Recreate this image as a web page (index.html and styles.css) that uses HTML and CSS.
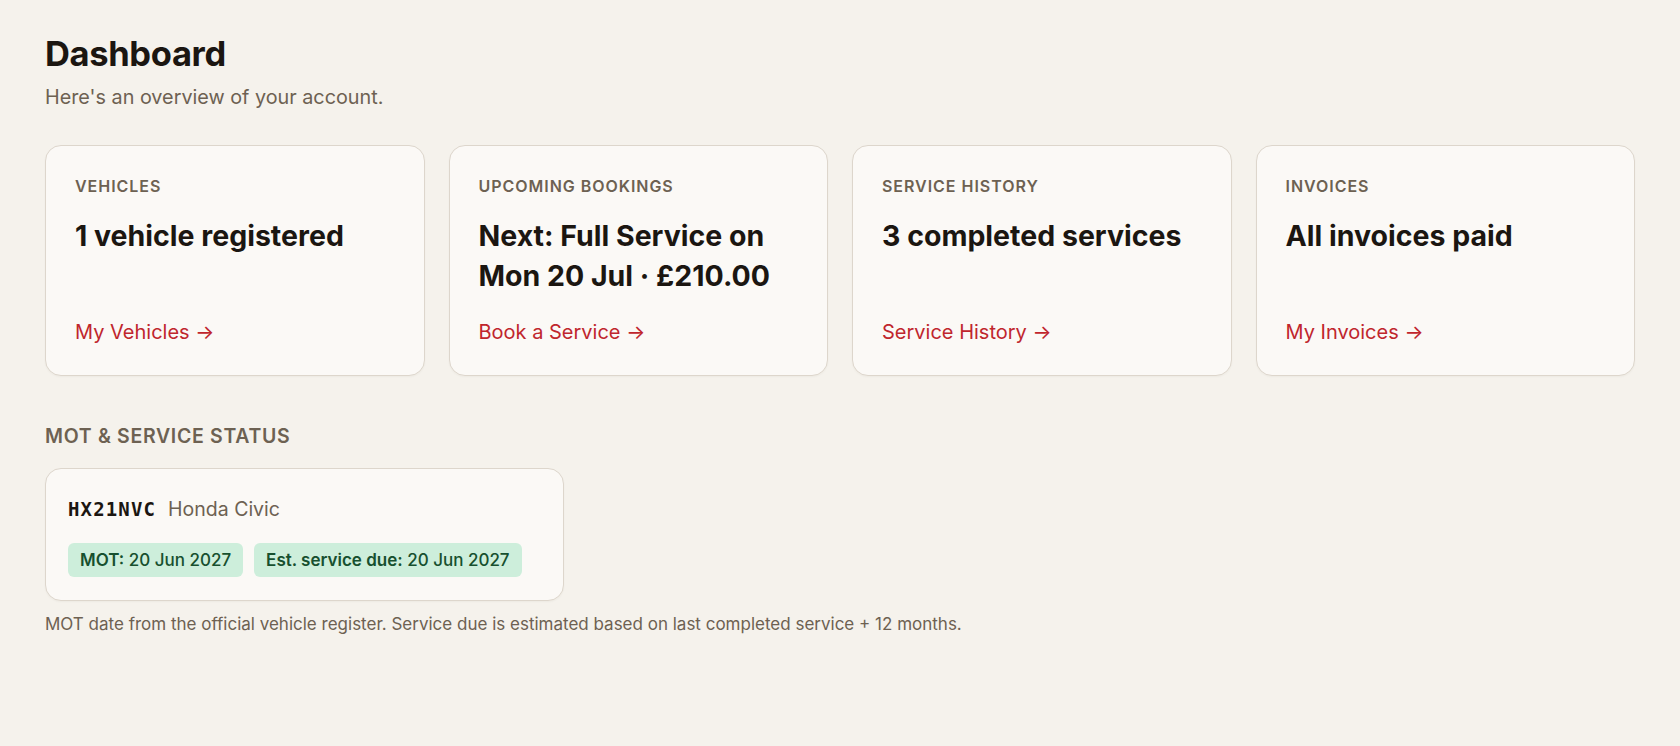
FILE: index.html
```html
<!DOCTYPE html>
<html lang="en">
<head>
    <meta charset="UTF-8">
    <meta name="viewport" content="width=device-width, initial-scale=1.0">
    <title>Dashboard</title>
    <link rel="stylesheet" href="styles.css">
</head>
<body>
    <main class="page">
        <header class="page-header">
            <h1>Dashboard</h1>
            <p class="subtitle">Here's an overview of your account.</p>
        </header>

        <section class="summary-grid">
            <div class="summary-card">
                <div class="card-label">Vehicles</div>
                <div class="card-value">1 vehicle registered</div>
                <a href="#" class="card-link">My Vehicles →</a>
            </div>
            <div class="summary-card">
                <div class="card-label">Upcoming Bookings</div>
                <div class="card-value">Next: Full Service on Mon 20 Jul · £210.00</div>
                <a href="#" class="card-link">Book a Service →</a>
            </div>
            <div class="summary-card">
                <div class="card-label">Service History</div>
                <div class="card-value">3 completed services</div>
                <a href="#" class="card-link">Service History →</a>
            </div>
            <div class="summary-card">
                <div class="card-label">Invoices</div>
                <div class="card-value">All invoices paid</div>
                <a href="#" class="card-link">My Invoices →</a>
            </div>
        </section>

        <section class="status">
            <h2>MOT &amp; Service Status</h2>
            <div class="status-card">
                <div class="vehicle-row">
                    <span class="plate">HX21NVC</span>
                    <span class="model">Honda Civic</span>
                </div>
                <div class="badges">
                    <span class="badge"><strong>MOT:</strong> 20 Jun 2027</span>
                    <span class="badge"><strong>Est. service due:</strong> 20 Jun 2027</span>
                </div>
            </div>
            <p class="footnote">MOT date from the official vehicle register. Service due is estimated based on last completed service + 12 months.</p>
        </section>
    </main>
</body>
</html>
```

FILE: styles.css
```css
:root {
    --bg: #f5f2ec;
    --card-bg: #fbf9f6;
    --border: #ddd6cc;
    --ink: #1b1611;
    --muted: #6d6152;
    --accent: #c0262d;
    --ok-bg: #cdeedb;
    --ok-ink: #17502f;
}

* {
    margin: 0;
    padding: 0;
    box-sizing: border-box;
    font-family: Inter, "Noto Sans", sans-serif;
}

body {
    background-color: var(--bg);
    color: var(--ink);
}

.page {
    padding: 33px 45px;
}

.page-header h1 {
    font-size: 34.5px;
    font-weight: 700;
    line-height: 1.2;
    letter-spacing: -0.01em;
}

.subtitle {
    margin-top: 9px;
    font-size: 19.8px;
    line-height: 1.5;
    color: var(--muted);
}

.summary-grid {
    display: grid;
    grid-template-columns: repeat(4, 1fr);
    gap: 24px;
    margin-top: 32px;
}

.summary-card {
    display: flex;
    flex-direction: column;
    padding: 30px 29px 29px;
    background: var(--card-bg);
    border: 1px solid var(--border);
    border-radius: 16px;
    box-shadow: 0 1px 2px rgba(60, 40, 20, 0.04);
}

.card-label {
    font-size: 16px;
    font-weight: 600;
    line-height: 21px;
    letter-spacing: 0.06em;
    text-transform: uppercase;
    color: var(--muted);
}

.card-value {
    margin-top: 19px;
    font-size: 28.5px;
    font-weight: 700;
    line-height: 40px;
}

.card-link {
    margin-top: auto;
    padding-top: 22px;
    font-size: 20px;
    line-height: 28px;
    color: var(--accent);
    text-decoration: none;
}

.status {
    margin-top: 47px;
}

.status h2 {
    font-size: 19.5px;
    font-weight: 600;
    line-height: 26px;
    letter-spacing: 0.035em;
    text-transform: uppercase;
    color: var(--muted);
}

.status-card {
    width: 519px;
    margin-top: 19px;
    padding: 27px 22px 23px;
    background: var(--card-bg);
    border: 1px solid var(--border);
    border-radius: 16px;
    box-shadow: 0 1px 2px rgba(60, 40, 20, 0.04);
}

.vehicle-row {
    display: flex;
    align-items: baseline;
    gap: 12px;
    line-height: 27px;
}

.plate {
    font-family: "DejaVu Sans Mono", monospace;
    font-size: 19px;
    font-weight: 700;
    letter-spacing: 0.06em;
}

.model {
    font-size: 19.5px;
    color: var(--muted);
}

.badges {
    display: flex;
    gap: 11px;
    margin-top: 20px;
}

.badge {
    padding: 6px 12px;
    font-size: 17px;
    font-weight: 500;
    line-height: 22px;
    color: var(--ok-ink);
    background: var(--ok-bg);
    border-radius: 6px;
}

.badge strong {
    font-weight: 600;
}

.footnote {
    margin-top: 11px;
    font-size: 17px;
    line-height: 24px;
    color: var(--muted);
}
```
